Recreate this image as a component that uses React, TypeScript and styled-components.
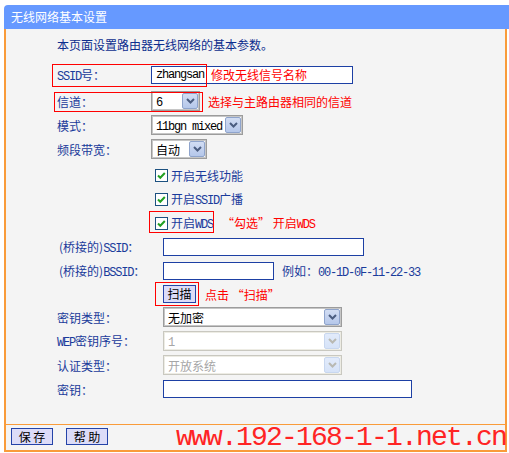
import * as React from 'react';
import styled, { createGlobalStyle } from 'styled-components';

const orange = '#f99b3a';
const labelBlue = '#1a3b9b';
const cjk = '"Noto Sans CJK SC", "Noto Sans", sans-serif';

const GlobalStyle = createGlobalStyle`
  html, body {
    margin: 0;
    padding: 0;
    background: #ffffff;
  }
  body {
    font-family: ${cjk};
    font-size: 12px;
  }
`;

export default function App() {
  return (
    <Page>
      <GlobalStyle />
      <TitleBar>无线网络基本设置</TitleBar>
      <Panel>
        <Intro>本页面设置路由器无线网络的基本参数。</Intro>
        <Form>
          <Row>
            <RedBox $l={-5} $t={1} $w={155} $h={23} />
            <Label $w={94}>
              <Latin>SSID</Latin>号：
            </Label>
            <TextInput $w={202}>
              <Latin $dark>zhangsan</Latin>
            </TextInput>
            <FloatNote $l={154}>修改无线信号名称</FloatNote>
          </Row>
          <Row $mt={2}>
            <RedBox $l={-3} $t={3} $w={149} $h={20} />
            <Label $w={94}>信道：</Label>
            <Select w={49} value={<Latin $dark>6</Latin>} />
            <Note $ml={8}>选择与主路由器相同的信道</Note>
          </Row>
          <Row>
            <Label $w={94}>模式：</Label>
            <Select w={92} value={<Latin $dark>11bgn mixed</Latin>} />
          </Row>
          <Row>
            <Label $w={94}>频段带宽：</Label>
            <Select w={56} value="自动" />
          </Row>
          <Row $mt={2}>
            <Label $w={94} />
            <CheckItem text="开启无线功能" />
          </Row>
          <Row>
            <Label $w={94} />
            <CheckItem text={<>开启<Latin>SSID</Latin>广播</>} />
          </Row>
          <Row>
            <RedBox $l={92} $t={0} $w={65} $h={22} />
            <Label $w={94} />
            <CheckItem text={<>开启<Latin>WDS</Latin></>} />
            <Note $ml={9}>“勾选” 开启<Latin>WDS</Latin></Note>
          </Row>
          <Row>
            <Label $w={106} $indent={2}>
              (桥接的)<Latin>SSID</Latin>：
            </Label>
            <TextInput $w={201} />
          </Row>
          <Row>
            <Label $w={106} $indent={2}>
              (桥接的)<Latin>BSSID</Latin>：
            </Label>
            <TextInput $w={111} />
            <Hint>
              例如：<Latin>00-1D-0F-11-22-33</Latin>
            </Hint>
          </Row>
          <Row $h={22}>
            <RedBox $l={98} $t={-1} $w={44} $h={24} />
            <Label $w={106} />
            <ScanButton>扫描</ScanButton>
            <Note $ml={9}>点击 “扫描”</Note>
          </Row>
          <Row>
            <Label $w={106}>密钥类型：</Label>
            <Select w={179} value="无加密" />
          </Row>
          <Row>
            <Label $w={106}>
              <Latin>WEP</Latin>密钥序号：
            </Label>
            <Select w={179} value={<Latin>1</Latin>} disabled />
          </Row>
          <Row>
            <Label $w={106}>认证类型：</Label>
            <Select w={179} value="开放系统" disabled />
          </Row>
          <Row>
            <Label $w={106}>密钥：</Label>
            <TextInput $w={249} />
          </Row>
        </Form>
      </Panel>
      <Footer>
        <FootButton>保 存</FootButton>
        <FootButton>帮 助</FootButton>
      </Footer>
      <Watermark>www.192-168-1-1.net.cn</Watermark>
    </Page>
  );
}

function Select(props: { w: number; value: React.ReactNode; disabled?: boolean }) {
  return (
    <SelectBox $w={props.w} $disabled={props.disabled}>
      <SelectValue $disabled={props.disabled}>{props.value}</SelectValue>
      <SelectBtn $disabled={props.disabled}>
        <svg width="9" height="6" viewBox="0 0 9 6">
          <path
            d="M1 1 L4.5 4.5 L8 1"
            fill="none"
            stroke={props.disabled ? '#b9b9b2' : '#4b5d80'}
            strokeWidth="2"
          />
        </svg>
      </SelectBtn>
    </SelectBox>
  );
}

function CheckItem(props: { text: React.ReactNode }) {
  return (
    <CheckWrap>
      <CheckBox>
        <svg width="11" height="11" viewBox="0 0 11 11">
          <path d="M2 5.5 L4.3 7.8 L8.8 3" fill="none" stroke="#22a022" strokeWidth="2" />
        </svg>
      </CheckBox>
      <span>{props.text}</span>
    </CheckWrap>
  );
}

const Page = styled.div`
  position: relative;
  width: 509px;
  padding-top: 5px;
`;

const TitleBar = styled.div`
  margin-left: 4px;
  height: 24px;
  line-height: 24px;
  padding-left: 7px;
  background: #6699ff;
  border-top-left-radius: 4px;
  color: #ffffff;
  font-size: 12px;
`;

const Panel = styled.div`
  margin-left: 4px;
  width: 503px;
  height: 395px;
  box-sizing: border-box;
  border-left: 2px solid ${orange};
  border-right: 2px solid ${orange};
  background: #f4f4f4;
  padding: 8px 0 0 51px;
`;

const Intro = styled.div`
  height: 16px;
  line-height: 16px;
  margin-bottom: 10px;
  color: #0d2e8e;
`;

const Form = styled.div`
  display: flex;
  flex-direction: column;
`;

const Row = styled.div<{ $h?: number; $mt?: number }>`
  position: relative;
  display: flex;
  align-items: center;
  height: ${(p) => p.$h ?? 24}px;
  margin-top: ${(p) => p.$mt ?? 0}px;
`;

const Label = styled.div<{ $w: number; $indent?: number }>`
  width: ${(p) => p.$w}px;
  flex-shrink: 0;
  box-sizing: border-box;
  padding-left: ${(p) => p.$indent ?? 0}px;
  color: ${labelBlue};
  white-space: nowrap;
`;

const Latin = styled.span<{ $dark?: boolean }>`
  font-family: "Liberation Mono", monospace;
  font-size: 12px;
  letter-spacing: -1.2px;
  color: ${(p) => (p.$dark ? '#000000' : 'inherit')};
`;

const TextInput = styled.div<{ $w: number }>`
  width: ${(p) => p.$w}px;
  height: 18px;
  box-sizing: border-box;
  border: 1px solid #1d40a4;
  background: #ffffff;
  display: flex;
  align-items: center;
  padding-left: 4px;
`;

const SelectBox = styled.div<{ $w: number; $disabled?: boolean }>`
  width: ${(p) => p.$w}px;
  height: 20px;
  box-sizing: border-box;
  display: flex;
  align-items: center;
  justify-content: space-between;
  background: #ffffff;
  border: 1px solid ${(p) => (p.$disabled ? '#c9c8c0' : '#9c9c9c')};
  box-shadow: inset 0 0 0 1px ${(p) => (p.$disabled ? '#edece4' : '#c6c6c6')};
  padding: 0 1px 0 4px;
`;

const SelectValue = styled.span<{ $disabled?: boolean }>`
  color: ${(p) => (p.$disabled ? '#a6a6a6' : '#000000')};
  white-space: nowrap;
`;

const SelectBtn = styled.span<{ $disabled?: boolean }>`
  width: 16px;
  height: 16px;
  box-sizing: border-box;
  border: 1px solid ${(p) => (p.$disabled ? '#c8d7ef' : '#8fa4cc')};
  border-radius: 2px;
  background: ${(p) =>
    p.$disabled
      ? 'linear-gradient(#e2ebfb, #d6e3f8)'
      : 'linear-gradient(#d2ddf3, #b5c7ea)'};
  display: flex;
  align-items: center;
  justify-content: center;
`;

const CheckWrap = styled.div`
  display: flex;
  align-items: center;
  gap: 3px;
  margin-left: 4px;
  color: ${labelBlue};
`;

const CheckBox = styled.span`
  width: 13px;
  height: 13px;
  box-sizing: border-box;
  border: 1px solid #1c5180;
  background: #ffffff;
  display: flex;
  align-items: center;
  justify-content: center;
`;

const Note = styled.span<{ $ml?: number }>`
  margin-left: ${(p) => p.$ml ?? 0}px;
  color: #ff0000;
  white-space: nowrap;
`;

const FloatNote = styled.span<{ $l: number }>`
  position: absolute;
  left: ${(p) => p.$l}px;
  top: 4px;
  line-height: 16px;
  color: #ff0000;
  white-space: nowrap;
`;

const RedBox = styled.div<{ $l: number; $t: number; $w: number; $h: number }>`
  position: absolute;
  left: ${(p) => p.$l}px;
  top: ${(p) => p.$t}px;
  width: ${(p) => p.$w}px;
  height: ${(p) => p.$h}px;
  box-sizing: border-box;
  border: 1px solid #ff0000;
  pointer-events: none;
`;

const Hint = styled.span`
  margin-left: 8px;
  color: ${labelBlue};
  white-space: nowrap;
`;

const ScanButton = styled.button`
  width: 33px;
  height: 18px;
  padding: 0;
  box-sizing: border-box;
  border: 1px solid #2443a8;
  background: #dcdcf8;
  color: #000000;
  font-family: ${cjk};
  font-size: 12px;
  line-height: 16px;
`;

const Footer = styled.div`
  margin-left: 4px;
  width: 503px;
  height: 28px;
  box-sizing: border-box;
  border: 2px solid ${orange};
  border-top-width: 1px;
  background: #f4f4f4;
  display: flex;
  gap: 13px;
  padding: 3px 0 0 5px;
`;

const FootButton = styled.button`
  width: 42px;
  height: 17px;
  padding: 0;
  box-sizing: border-box;
  border: 1px solid #2443a8;
  background: #dcdcf8;
  color: #000000;
  font-family: ${cjk};
  font-size: 12px;
  line-height: 15px;
`;

const Watermark = styled.div`
  position: absolute;
  left: 176px;
  top: 424px;
  font-family: "Liberation Mono", monospace;
  font-size: 28px;
  line-height: 28px;
  letter-spacing: -1.8px;
  color: #ff2424;
  white-space: nowrap;
  pointer-events: none;
`;
